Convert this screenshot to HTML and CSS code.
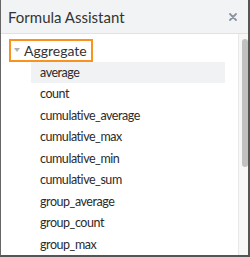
FILE: index.html
```html
<!DOCTYPE html>
<html lang="en">
  <head>
    <meta charset="UTF-8" />
    <title>Formula Assistant</title>
    <link rel="stylesheet" href="styles.css">
  </head>
  <body>
    <div class="panel">
      <!-- Header -->
      <header class="panel-header">
        <span class="panel-title">Formula Assistant</span>
        <svg class="close-icon" width="8" height="8" viewBox="0 0 8 8">
          <path d="M1 1 L7 7 M7 1 L1 7" stroke="#8c93a3" stroke-width="1.8" stroke-linecap="round" />
        </svg>
      </header>

      <!-- Tree -->
      <div class="panel-body">
        <div class="tree">
          <div class="group-label">
            <span class="caret"></span>
            <span>Aggregate</span>
          </div>
          <ul class="items">
            <li class="item active">average</li>
            <li class="item">count</li>
            <li class="item">cumulative_average</li>
            <li class="item">cumulative_max</li>
            <li class="item">cumulative_min</li>
            <li class="item">cumulative_sum</li>
            <li class="item">group_average</li>
            <li class="item">group_count</li>
            <li class="item">group_max</li>
          </ul>
        </div>
        <div class="scrollbar">
          <div class="thumb"></div>
        </div>
      </div>
    </div>
  </body>
</html>
```

FILE: styles.css
```css
body {
  margin: 0;
  font-family: Lato, "Open Sans", sans-serif;
  color: #333;
}

.panel {
  width: 250px;
  height: 257px;
  box-sizing: border-box;
  border-left: 1px solid #666;
  border-right: 2px solid #555;
  border-bottom: 2px solid #555;
  display: flex;
  flex-direction: column;
  overflow: hidden;
  background: #fff;
}

/* Header */
.panel-header {
  height: 33px;
  flex-shrink: 0;
  display: flex;
  align-items: center;
  justify-content: space-between;
  padding: 0 8px 0 7px;
  background: #f2f3f5;
  border-bottom: 1px solid #e0e1e3;
}

.panel-title {
  font-size: 15px;
  color: #333;
}

.close-icon {
  margin-right: 3px;
}

/* Body */
.panel-body {
  flex: 1;
  display: flex;
  min-height: 0;
}

.tree {
  flex: 1;
  padding: 2px 13px 0 8px;
  overflow: hidden;
}

.group-label {
  display: inline-flex;
  align-items: center;
  gap: 4px;
  height: 19px;
  padding: 0 4px 0 3px;
  border: 2px solid #f7931e;
  font-size: 14px;
}

.caret {
  width: 0;
  height: 0;
  border-left: 3px solid transparent;
  border-right: 3px solid transparent;
  border-top: 4px solid #b0b0b0;
}

.items {
  list-style: none;
  margin: 0 0 0 22px;
  padding: 0;
}

.item {
  height: 21.5px;
  line-height: 21.5px;
  padding-left: 9px;
  font-size: 12.5px;
  letter-spacing: -0.45px;
  color: #2b2b2b;
}

.item.active {
  background: #f1f2f4;
}

/* Scrollbar */
.scrollbar {
  width: 9px;
  flex-shrink: 0;
  background: #f7f7f7;
  border-left: 1px solid #e8e8e8;
}

.thumb {
  width: 6px;
  height: 128px;
  margin: 5px 0 0 3px;
  background: #c1c1c1;
  border-radius: 3px;
}
```
